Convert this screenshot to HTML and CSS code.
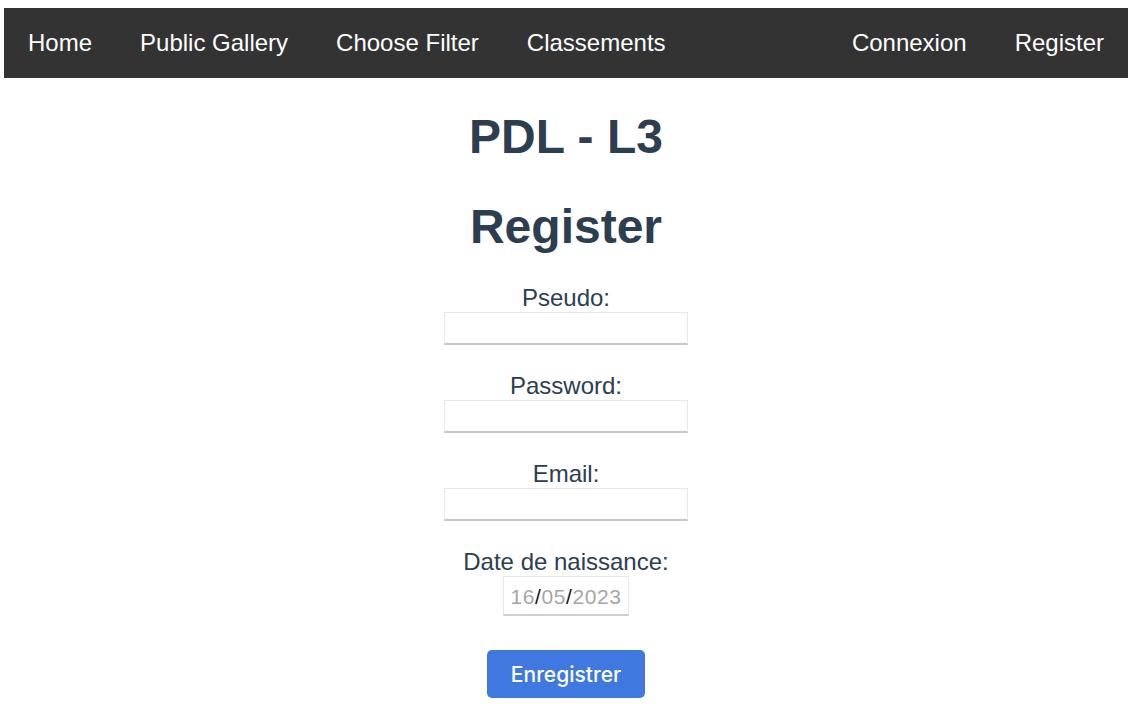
FILE: index.html
```html
<!DOCTYPE html>
<html lang="fr">
<head>
<meta charset="utf-8">
<title>PDL - L3</title>
<link rel="stylesheet" href="styles.css">
</head>
<body>
<div class="app">
  <nav class="topnav">
    <div class="nav-group">
      <a href="#">Home</a>
      <a href="#">Public Gallery</a>
      <a href="#">Choose Filter</a>
      <a href="#">Classements</a>
    </div>
    <div class="nav-group">
      <a href="#">Connexion</a>
      <a href="#">Register</a>
    </div>
  </nav>
  <h1 class="title">PDL - L3</h1>
  <h1 class="title title-second">Register</h1>
  <form class="form">
    <div class="field">
      <label for="pseudo">Pseudo:</label>
      <input id="pseudo" type="text" class="text-input">
    </div>
    <div class="field">
      <label for="password">Password:</label>
      <input id="password" type="password" class="text-input">
    </div>
    <div class="field">
      <label for="email">Email:</label>
      <input id="email" type="email" class="text-input">
    </div>
    <div class="field">
      <label>Date de naissance:</label>
      <div class="date-input"><span class="seg">16</span><span class="sep">/</span><span class="seg">05</span><span class="sep">/</span><span class="seg">2023</span></div>
    </div>
    <button type="button" class="submit">Enregistrer</button>
  </form>
</div>
</body>
</html>
```
FILE: styles.css
```css
html, body {
  background: #ffffff;
}
body {
  margin: 8px 8px 8px 4px;
}
.app {
  font-family: "Liberation Sans", Arial, Helvetica, sans-serif;
  color: #2c3e50;
  text-align: center;
}
.topnav {
  display: flex;
  justify-content: space-between;
  align-items: center;
  height: 70px;
  background: #333333;
}
.nav-group {
  display: flex;
  align-items: center;
}
.topnav a {
  color: #ffffff;
  text-decoration: none;
  font-size: 24px;
  padding: 0 24px;
}
.title {
  font-size: 48px;
  font-weight: bold;
  margin: 31px 0 30px;
}
.title-second {
  margin-top: 35px;
}
.form {
  display: flex;
  flex-direction: column;
  align-items: center;
}
.field {
  display: flex;
  flex-direction: column;
  align-items: center;
  margin-bottom: 27px;
}
.field label {
  font-size: 24px;
  line-height: 28px;
}
.text-input {
  box-sizing: border-box;
  width: 244px;
  height: 33px;
  margin: 0;
  border: 1px solid #e8e8e8;
  border-bottom: 2px solid #c6c6c6;
  background: #ffffff;
  font-size: 18px;
  padding: 0 6px;
  outline: none;
}
.date-input {
  box-sizing: border-box;
  width: 126px;
  height: 40px;
  display: flex;
  align-items: center;
  justify-content: center;
  border: 1px solid #e8e8e8;
  border-bottom: 2px solid #cfcfcf;
  font-family: "Liberation Sans", Arial, sans-serif;
  font-size: 21px;
  letter-spacing: 0.6px;
  padding-top: 2px;
}
.date-input .seg {
  color: #a6a6a6;
}
.date-input .sep {
  color: #111111;
}
.field:last-of-type {
  margin-bottom: 34px;
}
.submit {
  box-sizing: border-box;
  width: 158px;
  height: 48px;
  border: none;
  border-radius: 5px;
  background: #3f78de;
  color: #ffffff;
  font-family: Inter, "Open Sans", sans-serif;
  font-size: 21px;
  font-weight: 500;
  padding: 0;
}
```
